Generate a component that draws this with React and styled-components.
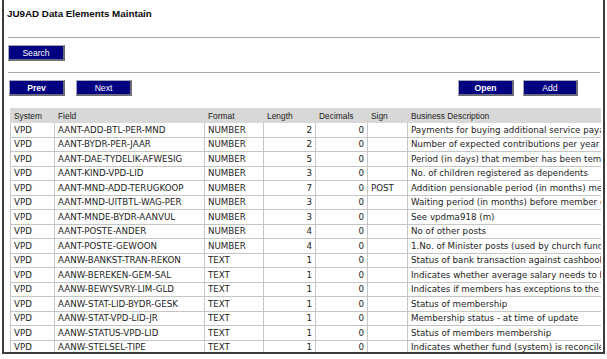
import React from "react";
import styled, { createGlobalStyle } from "styled-components";

const rows = [
  ["AANT-ADD-BTL-PER-MND", "NUMBER", 2, 0, "", "Payments for buying additional service payable"],
  ["AANT-BYDR-PER-JAAR", "NUMBER", 2, 0, "", "Number of expected contributions per year"],
  ["AANT-DAE-TYDELIK-AFWESIG", "NUMBER", 5, 0, "", "Period (in days) that member has been temporarily absent"],
  ["AANT-KIND-VPD-LID", "NUMBER", 3, 0, "", "No. of children registered as dependents"],
  ["AANT-MND-ADD-TERUGKOOP", "NUMBER", 7, 0, "POST", "Addition pensionable period (in months) member bought"],
  ["AANT-MND-UITBTL-WAG-PER", "NUMBER", 3, 0, "", "Waiting period (in months) before member can be paid"],
  ["AANT-MNDE-BYDR-AANVUL", "NUMBER", 3, 0, "", "See vpdma918 (m)"],
  ["AANT-POSTE-ANDER", "NUMBER", 4, 0, "", "No of other posts"],
  ["AANT-POSTE-GEWOON", "NUMBER", 4, 0, "", "1.No. of Minister posts (used by church funds)"],
  ["AANW-BANKST-TRAN-REKON", "TEXT", 1, 0, "", "Status of bank transaction against cashbook"],
  ["AANW-BEREKEN-GEM-SAL", "TEXT", 1, 0, "", "Indicates whether average salary needs to be calculated"],
  ["AANW-BEWYSVRY-LIM-GLD", "TEXT", 1, 0, "", "Indicates if members has exceptions to the limits"],
  ["AANW-STAT-LID-BYDR-GESK", "TEXT", 1, 0, "", "Status of membership"],
  ["AANW-STAT-VPD-LID-JR", "TEXT", 1, 0, "", "Membership status - at time of update"],
  ["AANW-STATUS-VPD-LID", "TEXT", 1, 0, "", "Status of members membership"],
  ["AANW-STELSEL-TIPE", "TEXT", 1, 0, "", "Indicates whether fund (system) is reconciled"],
];

const Global = createGlobalStyle`
  body {
    margin: 0;
    background: #fff;
    font-family: "Liberation Sans", Arial, sans-serif;
  }
`;

const Frame = styled.div`
  box-sizing: border-box;
  margin-left: 2px;
  width: 603px;
  height: 354px;
  border: 2px solid #3c3c3c;
  border-top: none;
  overflow: hidden;
  padding: 0 3px 0 4px;
  display: flex;
  flex-direction: column;
`;

const Title = styled.h1`
  margin: 8px 0 0 -1px;
  font-size: 9.8px;
  line-height: 12px;
  font-weight: bold;
  color: #0c0c0c;
`;

const Rule = styled.div`
  height: 0;
  border-top: 1px solid #a9a9a9;
  margin-top: ${(p) => p.top}px;
`;

const Bar = styled.div`
  display: flex;
  align-items: center;
  justify-content: space-between;
  margin-top: ${(p) => p.top}px;
  padding-right: 22px;
`;

const Group = styled.div`
  display: flex;
  gap: ${(p) => p.gap}px;
  margin-left: ${(p) => p.left || 0}px;
`;

const Button = styled.button`
  box-sizing: border-box;
  width: ${(p) => p.w || 56}px;
  height: 16px;
  padding: 0;
  background: #000080;
  color: #fff;
  font-family: "Liberation Sans", Arial, sans-serif;
  font-size: 8.6px;
  font-weight: ${(p) => (p.strong ? "bold" : "normal")};
  border-style: solid;
  border-width: 1px 2px 2px 1px;
  border-color: #a6a6b6 #6e6e7a #6e6e7a #a6a6b6;
  cursor: pointer;
`;

const TableWrap = styled.div`
  margin: 12px 0 0 2px;
  width: 591px;
  overflow: hidden;
`;

const Grid = styled.table`
  border-collapse: collapse;
  table-layout: fixed;
  width: 790px;
`;

const Head = styled.th`
  height: 13px;
  padding: 0 3px;
  background: #d8d8d8;
  border: 1px solid #d8d8d8;
  border-left-color: #f4f4f4;
  text-align: left;
  font-weight: normal;
  font-size: 8.4px;
  color: #222;
  white-space: nowrap;
  &:first-child {
    border-left-color: #d8d8d8;
  }
`;

const Cell = styled.td`
  height: 13.5px;
  padding: 0 3px;
  border: 1px solid #c6c6c6;
  font-family: "DejaVu Sans", Verdana, sans-serif;
  font-size: 8.7px;
  line-height: 12px;
  color: #1c1c1c;
  white-space: nowrap;
  overflow: hidden;
  text-align: ${(p) => (p.num ? "right" : "left")};
`;

const cols = [44, 150, 59, 52, 52, 40, 393];
const heads = ["System", "Field", "Format", "Length", "Decimals", "Sign", "Business Description"];

export default function App() {
  return (
    <>
      <Global />
      <Frame>
        <Title>JU9AD Data Elements Maintain</Title>
        <Rule top={17} />
        <Bar top={7}>
          <Group gap={0}>
            <Button w={57}>Search</Button>
          </Group>
        </Bar>
        <Rule top={11} />
        <Bar top={7}>
          <Group gap={11} left={1}>
            <Button strong>Prev</Button>
            <Button>Next</Button>
          </Group>
          <Group gap={9}>
            <Button strong>Open</Button>
            <Button w={55}>Add</Button>
          </Group>
        </Bar>
        <TableWrap>
          <Grid>
            <colgroup>
              {cols.map((w, i) => (
                <col key={i} style={{ width: w }} />
              ))}
            </colgroup>
            <thead>
              <tr>
                {heads.map((h) => (
                  <Head key={h}>{h}</Head>
                ))}
              </tr>
            </thead>
            <tbody>
              {rows.map((r) => (
                <tr key={r[0]}>
                  <Cell>VPD</Cell>
                  <Cell>{r[0]}</Cell>
                  <Cell>{r[1]}</Cell>
                  <Cell num>{r[2]}</Cell>
                  <Cell num>{r[3]}</Cell>
                  <Cell>{r[4]}</Cell>
                  <Cell>{r[5]}</Cell>
                </tr>
              ))}
            </tbody>
          </Grid>
        </TableWrap>
      </Frame>
    </>
  );
}
